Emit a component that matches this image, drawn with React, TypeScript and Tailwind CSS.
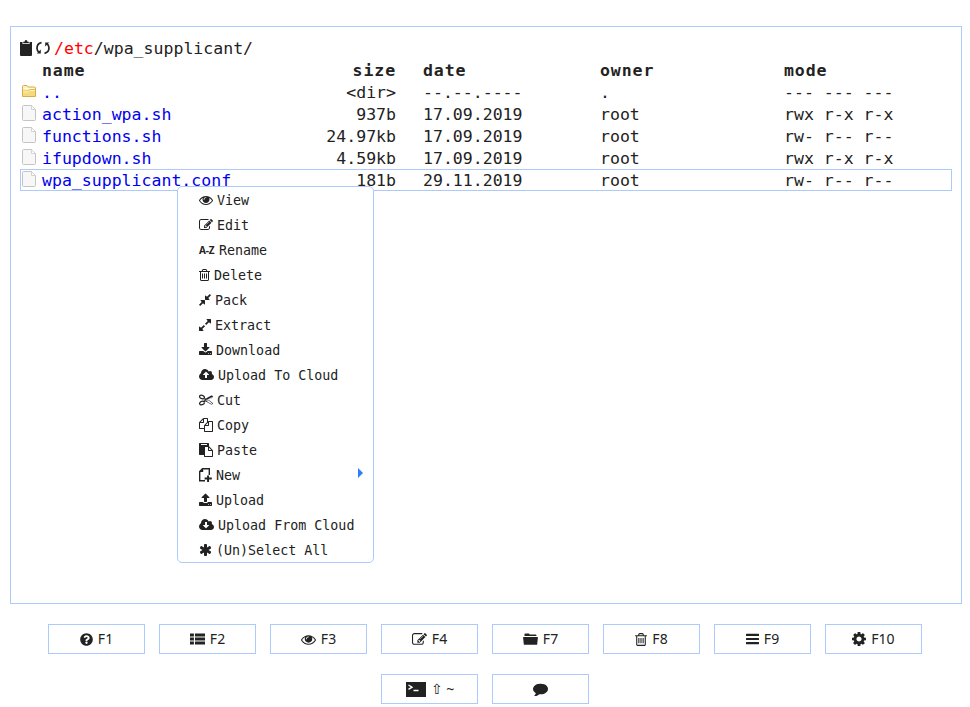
import type { ReactNode } from "react";
import { FaQuestionCircle } from "react-icons/fa";

type Glyph = { box: string; d: string };

const glyphs: Record<string, Glyph> = {
  eye: { box: "0 0 1792 1792", d: "M1664 960q-152-236-381-353 61 104 61 225 0 185-131.5 316.5t-316.5 131.5-316.5-131.5-131.5-316.5q0-121 61-225-229 117-381 353 133 205 333.5 326.5t434.5 121.5 434.5-121.5 333.5-326.5zm-720-384q0-20-14-34t-34-14q-125 0-214.5 89.5t-89.5 214.5q0 20 14 34t34 14 34-14 14-34q0-86 61-147t147-61q20 0 34-14t14-34zm848 384q0 34-20 69-140 230-376.5 368.5t-499.5 138.5-499.5-139-376.5-368q-20-35-20-69t20-69q140-229 376.5-368t499.5-139 499.5 139 376.5 368q20 35 20 69z" },
  edit: { box: "0 0 1792 1792", d: "M888 1184l116-116-152-152-116 116v56h96v96h56zm440-720q-16-16-33 1l-350 350q-17 17-1 33t33-1l350-350q17-17 1-33zm80 594v190q0 119-84.5 203.5t-203.5 84.5h-832q-119 0-203.5-84.5t-84.5-203.5v-832q0-119 84.5-203.5t203.5-84.5h832q63 0 117 25 15 7 18 23 3 17-9 29l-49 49q-14 14-32 8-23-6-45-6h-832q-66 0-113 47t-47 113v832q0 66 47 113t113 47h832q66 0 113-47t47-113v-126q0-13 9-22l64-64q15-15 35-7t20 29zm-96-738l288 288-672 672h-288v-288zm444 132l-92 92-288-288 92-92q28-28 68-28t68 28l152 152q28 28 28 68t-28 68z" },
  trash: { box: "192 0 1408 1792", d: "M704 736v576q0 14-9 23t-23 9h-64q-14 0-23-9t-9-23v-576q0-14 9-23t23-9h64q14 0 23 9t9 23zm256 0v576q0 14-9 23t-23 9h-64q-14 0-23-9t-9-23v-576q0-14 9-23t23-9h64q14 0 23 9t9 23zm256 0v576q0 14-9 23t-23 9h-64q-14 0-23-9t-9-23v-576q0-14 9-23t23-9h64q14 0 23 9t9 23zm128 724v-948h-896v948q0 22 7 40.5t14.5 27 10.5 8.5h832q3 0 10.5-8.5t14.5-27 7-40.5zm-672-1076h448l-48-117q-7-9-17-11h-317q-10 2-17 11zm928 32v64q0 14-9 23t-23 9h-96v948q0 83-47 143.5t-113 60.5h-832q-66 0-113-58.5t-47-141.5v-952h-96q-14 0-23-9t-9-23v-64q0-14 9-23t23-9h309l70-167q15-37 54-63t79-26h320q40 0 79 26t54 63l70 167h309q14 0 23 9t9 23z" },
  pack: { box: "128 0 1536 1792", d: "M896 960v448q0 26-19 45t-45 19-45-19l-144-144-332 332q-10 10-23 10t-23-10l-114-114q-10-10-10-23t10-23l332-332-144-144q-19-19-19-45t19-45 45-19h448q26 0 45 19t19 45zm755-672q0 13-10 23l-332 332 144 144q19 19 19 45t-19 45-45 19h-448q-26 0-45-19t-19-45v-448q0-26 19-45t45-19 45 19l144 144 332-332q10-10 23-10t23 10l114 114q10 10 10 23z" },
  extract: { box: "128 0 1536 1792", d: "M883 1056q0 13-10 23l-332 332 144 144q19 19 19 45t-19 45-45 19h-448q-26 0-45-19t-19-45v-448q0-26 19-45t45-19 45 19l144 144 332-332q10-10 23-10t23 10l114 114q10 10 10 23zm781-864v448q0 26-19 45t-45 19-45-19l-144-144-332 332q-10 10-23 10t-23-10l-114-114q-10-10-10-23t10-23l332-332-144-144q-19-19-19-45t19-45 45-19h448q26 0 45 19t19 45z" },
  download: { box: "64 0 1664 1792", d: "M1344 1344q0-26-19-45t-45-19-45 19-19 45 19 45 45 19 45-19 19-45zm256 0q0-26-19-45t-45-19-45 19-19 45 19 45 45 19 45-19 19-45zm128-224v320q0 40-28 68t-68 28h-1472q-40 0-68-28t-28-68v-320q0-40 28-68t68-28h465l135 136q58 56 136 56t136-56l136-136h464q40 0 68 28t28 68zm-325-569q17 41-14 70l-448 448q-18 19-45 19t-45-19l-448-448q-31-29-14-70 17-39 59-39h256v-448q0-26 19-45t45-19h256q26 0 45 19t19 45v448h256q42 0 59 39z" },
  upload: { box: "64 0 1664 1792", d: "M1344 1472q0-26-19-45t-45-19-45 19-19 45 19 45 45 19 45-19 19-45zm256 0q0-26-19-45t-45-19-45 19-19 45 19 45 45 19 45-19 19-45zm128-224v320q0 40-28 68t-68 28h-1472q-40 0-68-28t-28-68v-320q0-40 28-68t68-28h427q21 56 70.5 92t110.5 36h256q61 0 110.5-36t70.5-92h427q40 0 68 28t28 68zm-325-648q-17 40-59 40h-256v448q0 26-19 45t-45 19h-256q-26 0-45-19t-19-45v-448h-256q-42 0-59-40-17-39 14-69l448-448q18-19 45-19t45 19l448 448q31 30 14 69z" },
  cloudUp: { box: "0 64 1920 1792", d: "M1280 928q0-14-9-23l-352-352q-9-9-23-9t-23 9l-351 351q-10 12-10 24 0 14 9 23t23 9h224v352q0 13 9.5 22.5t22.5 9.5h192q13 0 22.5-9.5t9.5-22.5v-352h224q13 0 22.5-9.5t9.5-22.5zm640 288q0 159-112.5 271.5t-271.5 112.5h-1088q-185 0-316.5-131.5t-131.5-316.5q0-130 70-240t188-165q-2-30-2-43 0-212 150-362t362-150q156 0 285.5 87t188.5 231q71-62 166-62 106 0 181 75t75 181q0 76-41 138 130 31 213.5 135.5t83.5 238.5z" },
  cloudDown: { box: "0 64 1920 1792", d: "M1280 992q0-14-9-23t-23-9h-224v-352q0-13-9.5-22.5t-22.5-9.5h-192q-13 0-22.5 9.5t-9.5 22.5v352h-224q-13 0-22.5 9.5t-9.5 22.5q0 14 9 23l352 352q9 9 23 9t23-9l351-351q10-12 10-24zm640 224q0 159-112.5 271.5t-271.5 112.5h-1088q-185 0-316.5-131.5t-131.5-316.5q0-130 70-240t188-165q-2-30-2-43 0-212 150-362t362-150q156 0 285.5 87t188.5 231q71-62 166-62 106 0 181 75t75 181q0 76-41 138 130 31 213.5 135.5t83.5 238.5z" },
  cut: { box: "0 64 1792 1792", d: "M960 896q26 0 45 19t19 45-19 45-45 19-45-19-19-45 19-45 45-19zm300 64l507 398q28 20 25 56-5 35-35 51l-128 64q-13 7-29 7-17 0-31-8l-690-387-110 66q-8 4-12 5 14 49 10 97-7 77-56 147.5t-132 123.5q-132 84-277 84-136 0-222-78-90-84-79-207 7-76 56-147t131-124q132-84 278-84 83 0 151 31 9-13 22-22l122-73-122-73q-13-9-22-22-68 31-151 31-146 0-278-84-82-53-131-124t-56-147q-5-59 15.5-113t63.5-93q85-79 222-79 145 0 277 84 83 52 132 123t56 148q4 48-10 97 4 1 12 5l110 66 690-387q14-8 31-8 16 0 29 7l128 64q30 16 35 51 3 36-25 56zm-681-260q46-42 21-108t-106-117q-92-59-192-59-74 0-113 36-46 42-21 108t106 117q92 59 192 59 74 0 113-36zm-85 745q81-51 106-117t-21-108q-39-36-113-36-100 0-192 59-81 51-106 117t21 108q39 36 113 36 100 0 192-59zm178-613l96 58v-11q0-36 33-56l14-8-79-44-26 26q-3 3-10 11t-12 12q-2 2-4 3.5t-3 2.5zm224 224l96 32 736-413-128-64-768 431v113l-160 96 9 8q2 2 7 6 4 4 11 12t11 12l26 26zm704 416l128-64-520-408-177 138q-2 3-13 7z" },
  copy: { box: "0 0 1792 1792", d: "M1696 384q40 0 68 28t28 68v1216q0 40-28 68t-68 28h-960q-40 0-68-28t-28-68v-288h-544q-40 0-68-28t-28-68v-672q0-40 20-88t48-76l408-408q28-28 76-48t88-20h416q40 0 68 28t28 68v328q68-40 128-40h416zm-544 213l-299 299h299v-299zm-640-384l-299 299h299v-299zm196 647l316-316v-416h-384v416q0 40-28 68t-68 28h-416v640h512v-256q0-40 20-88t48-76zm956 804v-1152h-384v416q0 40-28 68t-68 28h-416v640h896z" },
  paste: { box: "0 0 1792 1792", d: "M768 1664h896v-640h-416q-40 0-68-28t-28-68v-416h-384v1152zm256-1440v-64q0-13-9.5-22.5t-22.5-9.5h-704q-13 0-22.5 9.5t-9.5 22.5v64q0 13 9.5 22.5t22.5 9.5h704q13 0 22.5-9.5t9.5-22.5zm256 672h299l-299-299v299zm512 128v672q0 40-28 68t-68 28h-960q-40 0-68-28t-28-68v-160h-544q-40 0-68-28t-28-68v-1344q0-40 28-68t68-28h1088q40 0 68 28t28 68v328q21 13 36 28l408 408q28 28 48 76t20 88z" },
  fileNew: { box: "0 0 13 14", d: "M3.2 0H11V7H9.6V1.4H4.2V4H1.4V12H6V13.4H0V3.2ZM8.1 7.6H10V9.6H12.8V11.5H10V14H8.1V11.5H5.6V9.6H8.1Z" },
  star: { box: "64 0 1664 1792", d: "M1546 1050q46 26 59.5 77.5t-12.5 97.5l-64 110q-26 46-77.5 59.5t-97.5-12.5l-266-153v307q0 52-38 90t-90 38h-128q-52 0-90-38t-38-90v-307l-266 153q-46 26-97.5 12.5t-77.5-59.5l-64-110q-26-46-12.5-97.5t59.5-77.5l266-154-266-154q-46-26-59.5-77.5t12.5-97.5l64-110q26-46 77.5-59.5t97.5 12.5l266 153v-307q0-52 38-90t90-38h128q52 0 90 38t38 90v307l266-153q46-26 97.5-12.5t77.5 59.5l64 110q26 46 12.5 97.5t-59.5 77.5l-266 154z" },
  list: { box: "0 0 15 14", d: "M0 1.4h3.9v3H0zM5 1.4h10v3H5zM0 5.5h3.9v3H0zM5 5.5h10v3H5zM0 9.6h3.9v3H0zM5 9.6h10v3H5z" },
  folder: { box: "0 0 15 14", d: "M1.5 4V2.5Q1.5 1.6 2.4 1.6H5.6Q6.4 1.6 6.6 2.6H12.6Q13.5 2.6 13.5 3.5V4ZM0.5 5H14.5Q15 5 14.9 5.6L14.2 12.2Q14.1 12.8 13.5 12.8H1.5Q.9 12.8.8 12.2L.1 5.6Q0 5 .5 5Z" },
  bars: { box: "0 0 13 14", d: "M.5 1.700h12q.5 0 .5.5v1.200q0 .5-.5.5H.5q-.5 0-.5-.5V2.200q0-.5.5-.5zM.5 5.900h12q.5 0 .5.5v1.200q0 .5-.5.5H.5q-.5 0-.5-.5V6.400q0-.5.5-.5zM.5 10.100h12q.5 0 .5.5v1.200q0 .5-.5.5H.5q-.5 0-.5-.5v-1.200q0-.5.5-.5z" },
  gear: { box: "128 128 1536 1536", d: "M1176 896q0-116-82-198t-198-82-198 82-82 198 82 198 198 82 198-82 82-198zm488-109v222q0 12-8 23t-20 13l-185 28q-19 54-39 91 35 50 107 138 10 12 10 25t-9 23q-27 37-99 108t-94 71q-12 0-26-9l-138-108q-44 23-91 38-16 136-29 186-7 28-36 28h-222q-14 0-24.5-8.5t-11.5-21.5l-28-184q-49-16-90-37l-141 107q-10 9-25 9-14 0-25-11-126-114-165-168-7-10-7-23 0-12 8-23 15-21 51-66.5t54-70.5q-27-50-41-99l-183-27q-13-2-21-12.5t-8-23.5v-222q0-12 8-23t19-13l186-28q14-46 39-92-40-57-107-138-10-12-10-24 0-10 9-23 26-36 98.500-107.500t94.500-71.500q13 0 26 10l138 107q44-23 91-38 16-136 29-186 7-28 36-28h222q14 0 24.500 8.500t11.500 21.500l28 184q49 16 90 37l142-107q9-9 24-9 13 0 25 10 129 119 165 170 7 8 7 22 0 12-8 23-15 21-51 66.500t-54 70.500q26 50 41 98l183 28q13 2 21 12.500t8 23.500z" },
  chat: { box: "0 64 1792 1664", d: "M1792 896q0 174-120 321.500t-326 233-450 85.500q-70 0-145-8-198 175-460 242-49 14-114 22-17 2-30.500-9t-17.500-29v-1q-3-4-.5-12t2-10 4.500-9.500l6-9 7-8.500 8-9q7-8 31-34.500t34.500-38 31-39.500 32.500-51 27-59 26-76q-157-89-247.500-220t-90.500-281q0-130 71-248.500t191-204.500 286-136.500 348-50.500q244 0 450 85.500t326 233 120 321.500z" },
};

function Icon({ name, className }: { name: string; className: string }) {
  const g = glyphs[name];
  return (
    <svg viewBox={g.box} className={`shrink-0 ${className}`} fill="currentColor" fillRule="evenodd">
      <path d={g.d} />
    </svg>
  );
}

function FolderIcon() {
  return (
    <svg viewBox="0 0 14 12" className="h-3 w-3.5">
      <path d="M.5 11.5V1.5Q.5.5 1.500.5H5L6.200 2H12.500Q13.500 2 13.500 3V11.500Z" fill="#fdf0bd" stroke="#d9ac49" />
      <path d="M2 3.500H12" stroke="#fffbe0" />
      <path d="M1 11V6.500H6L7.500 5H13V11Z" fill="#f5d97c" />
      <path d="M1 6H6L7.500 4.500H13" stroke="#dcae47" strokeWidth=".8" fill="none" />
      <path d="M1 7H6.300L7.800 5.500H13" stroke="#fff3b5" fill="none" />
    </svg>
  );
}

function FileIcon() {
  return (
    <svg viewBox="0 0 14 16" className="h-4 w-3.5">
      <path d="M1.500.5H9.500L13.500 4.500V14.500Q13.500 15.500 12.500 15.500H1.500Q.5 15.500.5 14.500V1.500Q.5.5 1.500.5Z" fill="#f7f7f7" stroke="#c4c4c4" />
      <path d="M9.500.8V4.500H13.200" fill="#fff" stroke="#c9c9c9" strokeWidth=".8" />
    </svg>
  );
}

const files = [
  ["..", "<dir>", "--.--.----", ".", "--- --- ---"],
  ["action_wpa.sh", "937b", "17.09.2019", "root", "rwx r-x r-x"],
  ["functions.sh", "24.97kb", "17.09.2019", "root", "rw- r-- r--"],
  ["ifupdown.sh", "4.59kb", "17.09.2019", "root", "rwx r-x r-x"],
  ["wpa_supplicant.conf", "181b", "29.11.2019", "root", "rw- r-- r--"],
];

function Row({ cells, head, icon, current }: { cells: string[]; head?: boolean; icon?: ReactNode; current?: boolean }) {
  return (
    <div
      className={`grid h-[22px] grid-cols-[21px_250px_104px_177px_184px_1fr] items-center whitespace-pre border leading-5 ${
        current ? "border-[#adcafd]" : "border-transparent"
      } ${head ? "font-bold tracking-[0.9px]" : ""}`}
    >
      <span className="flex pb-[3px] pl-px">{icon}</span>
      <span className={`pt-px ${head ? "" : "text-[#0000ee]"}`}>{cells[0]}</span>
      <span className="pt-px text-right">{cells[1]}</span>
      <span className="pl-[27px] pt-px">{cells[2]}</span>
      <span className="pl-[27px] pt-px">{cells[3]}</span>
      <span className="pl-[27px] pt-px">{cells[4]}</span>
    </div>
  );
}

const menu: [string, string, string][] = [
  ["eye", "View", "w-3.5"],
  ["edit", "Edit", "w-3.5"],
  ["az", "Rename", "w-4"],
  ["trash", "Delete", "w-[11px]"],
  ["pack", "Pack", "w-3"],
  ["extract", "Extract", "w-3"],
  ["download", "Download", "w-[13px]"],
  ["cloudUp", "Upload To Cloud", "w-[15px]"],
  ["cut", "Cut", "w-3.5"],
  ["copy", "Copy", "w-3.5"],
  ["paste", "Paste", "w-3.5"],
  ["fileNew", "New", "w-[13px]"],
  ["upload", "Upload", "w-[13px]"],
  ["cloudDown", "Upload From Cloud", "w-[15px]"],
  ["star", "(Un)Select All", "w-[13px]"],
];

function ContextMenu() {
  return (
    <ul className="absolute left-[177px] top-[186px] w-[197px] rounded-[5px] border border-[#adcafd] bg-white text-[13.33px]">
      {menu.map(([icon, label, width]) => (
        <li key={label} className="flex h-[25px] items-center gap-1 pl-[21px] pr-2.5">
          {icon === "az" ? (
            <span className="w-4 pt-px font-['Open_Sans',sans-serif] text-[10px] font-bold leading-none tracking-[-0.2px]">A-Z</span>
          ) : (
            <Icon name={icon} className={`h-3.5 ${width}`} />
          )}
          <span className="whitespace-pre pt-0.5 leading-4">{label}</span>
          {label === "New" && (
            <span className="mb-1 ml-auto border-y-[5px] border-l-[5px] border-y-transparent border-l-[#2f7cf6]" />
          )}
        </li>
      ))}
    </ul>
  );
}

function Key({ icon, label }: { icon: ReactNode; label?: string }) {
  return (
    <button className="flex h-[30px] w-[97px] items-center justify-center gap-[5px] border border-[#adcafd] bg-white">
      {icon}
      {label && <span className="pb-px leading-5">{label}</span>}
    </button>
  );
}

export default function App() {
  return (
    <div className="h-[707px] bg-white pt-[26px] font-['DejaVu_Sans_Mono',monospace] text-[#222]">
      <main className="ml-2.5 h-[578px] w-[952px] border border-[#adcafd] px-[9px] pt-2.5 text-[16.55px] leading-[22px]">
        <div className="flex h-[22px] items-center">
          <svg viewBox="0 0 12 16" className="h-4 w-3" fill="currentColor">
            <path d="M0 2H2.500V4H9.500V2H12V15Q12 16 11 16H1Q0 16 0 15ZM3.200 3.200V1.800H4.500Q4.600 0 6 0T7.500 1.800H8.800V3.200Z" />
          </svg>
          <svg viewBox="0 0 14 14" className="ml-1 h-3.5 w-3.5" fill="none" stroke="currentColor" strokeWidth="1.700">
            <path d="M5.500 1.700Q1 2.500 1 7.200Q1 9.600 3 11.400M8.500 12.300Q13 11.500 13 6.800Q13 4.400 11 2.600" />
            <path d="M.8 12.600H4.800V8.600ZM13.200 1.400H9.200V5.400Z" fill="currentColor" stroke="none" />
          </svg>
          <span className="ml-1 whitespace-pre pt-0.5">
            <span className="text-[#ff0000]">/etc</span>/wpa_supplicant/
          </span>
        </div>
        <Row head cells={["name", "size", "date", "owner", "mode"]} />
        {files.map((cells, i) => (
          <Row key={cells[0]} cells={cells} icon={i ? <FileIcon /> : <FolderIcon />} current={i === 4} />
        ))}
      </main>
      <ContextMenu />
      <div className="mt-5 flex flex-col items-center gap-5 font-['Noto_Sans',sans-serif] text-[14px]">
        <div className="flex gap-3.5">
          <Key icon={<FaQuestionCircle className="h-[13px] w-[13px]" />} label="F1" />
          <Key icon={<Icon name="list" className="h-3.5 w-[15px]" />} label="F2" />
          <Key icon={<Icon name="eye" className="h-[15px] w-[15px]" />} label="F3" />
          <Key icon={<Icon name="edit" className="h-[15px] w-[15px]" />} label="F4" />
          <Key icon={<Icon name="folder" className="h-3.5 w-[15px]" />} label="F7" />
          <Key icon={<Icon name="trash" className="h-[15px] w-3" />} label="F8" />
          <Key icon={<Icon name="bars" className="h-3.5 w-[13px]" />} label="F9" />
          <Key icon={<Icon name="gear" className="h-3.5 w-3.5" />} label="F10" />
        </div>
        <div className="flex gap-3.5">
          <Key
            icon={
              <svg viewBox="0 0 20 15" className="ml-px h-[15px] w-5" fill="none">
                <path d="M0 0H20V15H0Z" fill="#222" />
                <path d="M2.500 3L6 5.200L2.500 7.400M7.500 8.500H12.500" stroke="#fff" strokeWidth="1.400" />
              </svg>
            }
            label="⇧ ~"
          />
          <Key icon={<Icon name="chat" className="h-3.5 w-[15px]" />} />
        </div>
      </div>
    </div>
  );
}
